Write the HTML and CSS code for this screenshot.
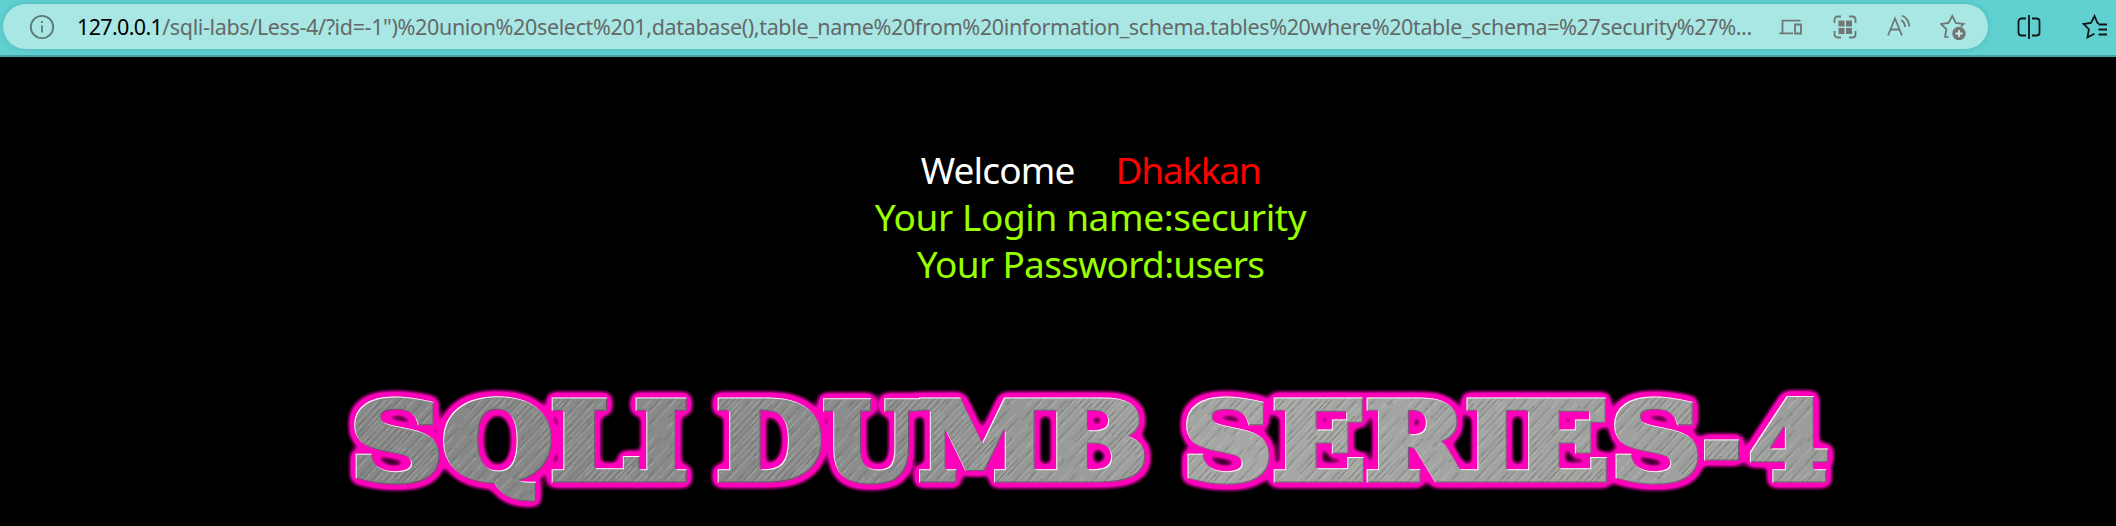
FILE: index.html
```html
<!DOCTYPE html>
<html lang="en">
<head>
<meta charset="utf-8">
<title>Less-4</title>
<link rel="stylesheet" href="styles.css">
</head>
<body>
<header class="toolbar">
  <div class="address">
    <svg class="info" viewBox="0 0 26 26"><circle cx="13" cy="13" r="11.2"/><path d="M13 11.5v7M13 7v2"/></svg>
    <div class="url"><span class="host">127.0.0.1</span><span class="path">/sqli-labs/Less-4/?id=-1")%20union%20select%201,database(),table_name%20from%20information_schema.tables%20where%20table_schema=%27security%27%...</span></div>
    <div class="actions">
      <svg viewBox="0 0 26 26"><path d="M4.500 18.500V6.700H22.500M1.500 19.300H15M17 10.500h6v9h-6z"/></svg>
      <svg viewBox="0 0 26 26"><path d="M2.500 9V5.500a3 3 0 0 1 3-3H9M17 2.500h3.500a3 3 0 0 1 3 3V9M23.500 17v3.500a3 3 0 0 1-3 3H17M9 23.500H5.500a3 3 0 0 1-3-3V17"/><path class="solid" d="M6.500 6.500h6v6h-6zM14 6.500h6v6h-6zM6.500 14h6v6h-6zM14 14h6v6h-6z"/></svg>
      <svg viewBox="0 0 26 26"><path d="M2 21.500L9 4.500l7 17M4.500 15.500h9M15 6q4 2.500 4 7M16 1.500q7 3.500 7.300 11"/></svg>
      <svg viewBox="0 0 26 26"><path d="M8.500 23.200L5 22.800l1.400-7.600L1 10l7.500-1.100L12.300 2l3.500 6.900 7.700 1.100-2.500 2.600"/><circle class="solid" cx="19" cy="19.500" r="6.700"/><path class="plus" d="M19 16v7M15.500 19.500h7"/></svg>
    </div>
  </div>
  <div class="tools">
    <svg viewBox="0 0 26 26"><path d="M10 4.500H5.500a3 3 0 0 0-3 3v11a3 3 0 0 0 3 3H10M16 4.500h4.500a3 3 0 0 1 3 3v11a3 3 0 0 1-3 3H16M13 1v24"/></svg>
    <svg viewBox="0 0 26 26"><path d="M17 9.500l-1.500-.5L12.500 2 9 8.900 1.500 10l5.400 5.200-1.400 8.200 7-3.600M16.500 10.500H25M16.500 15.500H25M16.500 20.500H25"/></svg>
  </div>
</header>
<main class="page">
  <div class="message">
    <p class="line welcome"><span>Welcome</span><span class="name">Dhakkan</span></p>
    <p class="line login">Your Login name:security</p>
    <p class="line password">Your Password:users</p>
  </div>
  <svg class="banner" viewBox="330 376 1530 150">
    <defs>
      <linearGradient id="metal" gradientUnits="userSpaceOnUse" x1="350" y1="0" x2="1830" y2="0">
        <stop offset="0" stop-color="#858786"/><stop offset=".35" stop-color="#8b8d8c"/>
        <stop offset=".6" stop-color="#a6a8a6"/><stop offset="1" stop-color="#9b9d9b"/>
      </linearGradient>
      <pattern id="brushed" patternUnits="userSpaceOnUse" width="31" height="130" patternTransform="rotate(43)">
        <g class="scratch-light"><path d="M2 0v60M5 40v80M9 10v70M13 50v70M18 0v90M23 35v90M28 20v60"/></g>
        <g class="scratch-dark"><path d="M3.500 30v80M7 0v50M11 60v70M16 20v60M20 70v60M25 0v80M30 40v70"/></g>
      </pattern>
      <filter id="neon" filterUnits="userSpaceOnUse" x="330" y="376" width="1530" height="150" color-interpolation-filters="sRGB">
        <feMorphology in="SourceAlpha" operator="dilate" radius="2"/>
        <feGaussianBlur stdDeviation="4"/>
        <feComponentTransfer result="halo"><feFuncA type="linear" slope="4" intercept="-.25"/></feComponentTransfer>
        <feFlood flood-color="#ff00bb"/><feComposite in2="halo" operator="in" result="pink"/>
        <feOffset in="SourceAlpha" dx="1.300" dy="1.300" result="shift"/>
        <feComposite in="SourceAlpha" in2="shift" operator="out" result="edge"/>
        <feFlood flood-color="#fff0fa"/><feComposite in2="edge" operator="in" result="shine"/>
        <feOffset in="SourceAlpha" dx="-1" dy="-1" result="shift2"/>
        <feComposite in="SourceAlpha" in2="shift2" operator="out" result="edge2"/>
        <feFlood flood-color="#603058" flood-opacity=".65"/><feComposite in2="edge2" operator="in" result="shade"/>
        <feMerge><feMergeNode in="pink"/><feMergeNode in="SourceGraphic"/><feMergeNode in="shade"/><feMergeNode in="shine"/></feMerge>
      </filter>
      <g id="title">
        <text y="478.500"><tspan x="350" textLength="93" lengthAdjust="spacingAndGlyphs">S</tspan><tspan x="442" textLength="111" lengthAdjust="spacingAndGlyphs">Q</tspan><tspan x="550" textLength="88" lengthAdjust="spacingAndGlyphs">L</tspan><tspan x="634" textLength="54" lengthAdjust="spacingAndGlyphs">I</tspan> <tspan x="716" textLength="107" lengthAdjust="spacingAndGlyphs">D</tspan><tspan x="823" textLength="95" lengthAdjust="spacingAndGlyphs">U</tspan><tspan x="918" textLength="129" lengthAdjust="spacingAndGlyphs">M</tspan><tspan x="1043" textLength="105" lengthAdjust="spacingAndGlyphs">B</tspan> <tspan x="1182" textLength="91" lengthAdjust="spacingAndGlyphs">S</tspan><tspan x="1272" textLength="94" lengthAdjust="spacingAndGlyphs">E</tspan><tspan x="1365" textLength="101" lengthAdjust="spacingAndGlyphs">R</tspan><tspan x="1465" textLength="54" lengthAdjust="spacingAndGlyphs">I</tspan><tspan x="1515" textLength="94" lengthAdjust="spacingAndGlyphs">E</tspan><tspan x="1610" textLength="92" lengthAdjust="spacingAndGlyphs">S</tspan><tspan x="1702" textLength="39" lengthAdjust="spacingAndGlyphs">-</tspan><tspan x="1749" textLength="80" lengthAdjust="spacingAndGlyphs">4</tspan></text>
      </g>
    </defs>
    <g filter="url(#neon)"><use href="#title" class="base"/><use href="#title" class="texture"/></g>
  </svg>
</main>
</body>
</html>
```
FILE: styles.css
```css
* { box-sizing: border-box; }
body { margin: 0; height: 526px; overflow: hidden; background: #000; font-family: "Noto Sans", "Open Sans", sans-serif; }
svg { display: block; fill: none; stroke-width: 1.8; flex: none; }
.toolbar { display: flex; align-items: flex-start; height: 57px; padding: 4px 0 0 3px; background: #60d0d0; border-bottom: 2px solid #43a3a5; overflow: hidden; }
.address { display: flex; align-items: center; width: 1985px; height: 45px; padding: 0 22px 0 26px; border-radius: 23px; background: #a8e7e4; box-shadow: 0 0 6px rgba(0, 70, 80, .18); }
.info { width: 26px; height: 26px; stroke: #5f7877; }
.url { width: 1680px; margin-left: 22px; font-size: 21.5px; line-height: 30px; white-space: nowrap; }
.host { color: #000; letter-spacing: -.65px; }
.path { color: #646968; letter-spacing: -.36px; }
.actions { display: flex; gap: 28px; margin-left: auto; stroke: #707776; }
.actions svg, .tools svg { width: 26px; height: 26px; }
.solid { fill: #707776; stroke: none; }
.plus { stroke: #c9efed; }
.tools { display: flex; gap: 40px; padding: 10px 0 0 28px; stroke: #10191a; }
.page { width: 2116px; }
.message { display: flex; flex-direction: column; align-items: center; width: 2181px; padding-top: 89px; }
.line { margin: 0; height: 47px; line-height: 47px; font-size: 37px; white-space: pre; color: #9f0; }
.welcome { display: flex; gap: 41px; color: #fff; letter-spacing: -.85px; }
.name { color: #f00; letter-spacing: -1.3px; }
.login { letter-spacing: -.4px; }
.password { letter-spacing: -.7px; }
.banner { width: 1530px; height: 150px; margin: 89px 0 0 330px; }
.banner text { font-family: "DejaVu Serif", serif; font-weight: 700; font-size: 106px; }
.base { fill: url(#metal); stroke: url(#metal); stroke-width: 7; }
.texture { fill: url(#brushed); stroke: url(#brushed); stroke-width: 7; }
.scratch-light { stroke: #d4d6d2; stroke-opacity: .22; stroke-width: 1; }
.scratch-dark { stroke: #444746; stroke-opacity: .25; stroke-width: 1; }
```
